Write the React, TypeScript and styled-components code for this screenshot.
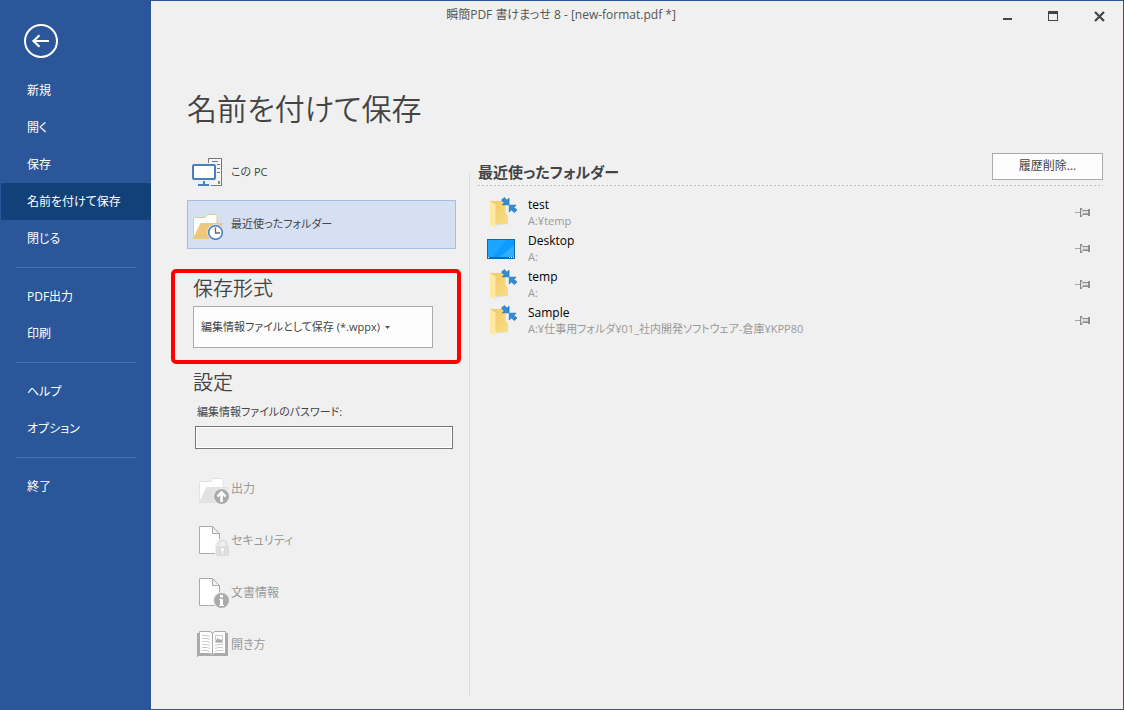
import React from "react";
import styled, { createGlobalStyle } from "styled-components";

const GlobalStyle = createGlobalStyle`
  *, *::before, *::after { box-sizing: border-box; }
  body {
    margin: 0;
    background: #f0f0f0;
    color: #444;
    font-family: "Open Sans", "Noto Sans CJK JP", sans-serif;
    font-size: 12px;
    line-height: 16px;
    font-feature-settings: "palt";
  }
  button, input, select { font: inherit; color: inherit; font-feature-settings: inherit; }
  h1, h2, p, ul { margin: 0; padding: 0; }
  svg { display: block; flex: none; }
`;

const Window = styled.div`
  display: flex;
  min-height: 100vh;
  border: 1px solid #2b579a;
`;

const Sidebar = styled.nav`
  flex: none;
  width: 150px;
  padding-top: 23px;
  background: #2b579a;
`;

const BackButton = styled.button`
  display: block;
  margin: 0 0 14px 23px;
  padding: 0;
  border: 0;
  background: none;
`;

const NavItem = styled.button<{ $active?: boolean }>`
  display: block;
  width: 100%;
  height: 37px;
  padding: 0 0 0 26px;
  border: 0;
  background: ${(p) => (p.$active ? "#124078" : "transparent")};
  color: #fff;
  text-align: left;
`;

const NavDivider = styled.hr`
  height: 1px;
  margin: 10px 15px;
  border: 0;
  background: #4472b9;
`;

const Main = styled.main`
  flex: 1;
  min-width: 0;
  display: flex;
  flex-direction: column;
`;

const TitleBar = styled.header`
  display: flex;
  height: 30px;
  padding-right: 1px;
`;

const WindowTitle = styled.p`
  flex: 1;
  padding: 6px 13px 0 0;
  color: #555;
  text-align: center;
`;

const CaptionButton = styled.button`
  display: flex;
  align-items: center;
  justify-content: center;
  width: 46px;
  padding: 0;
  border: 0;
  background: none;
`;

const PageTitle = styled.h1`
  margin: 54px 0 15px 36px;
  font-size: 30px;
  font-weight: 350;
  line-height: 48px;
`;

const Columns = styled.div`
  flex: 1;
  display: flex;
  gap: 8px;
  padding: 0 20px 13px;
`;

const SaveColumn = styled.div`
  flex: none;
  width: 290px;
  font-size: 11px;
`;

const Places = styled.div`
  display: flex;
  flex-direction: column;
  gap: 3px;
  padding: 0 5px 0 16px;
`;

const Place = styled.button<{ $selected?: boolean }>`
  display: flex;
  align-items: center;
  gap: 8px;
  height: 49px;
  padding: 0 3px 1px;
  border: 1px solid ${(p) => (p.$selected ? "#a3bde3" : "transparent")};
  background: ${(p) => (p.$selected ? "#d5e1f2" : "transparent")};
  line-height: 18px;
  text-align: left;

  &:disabled {
    gap: 2px;
    padding-left: 9px;
    color: #999;
    font-size: 12px;
  }
`;

const FormatSection = styled.section`
  margin-top: 20px;
  padding: 0 24px 12px 18px;
  border: 4px solid #f00;
  border-radius: 5px;
`;

const SettingsSection = styled.section`
  margin: 3px 0 16px;
  padding: 0 8px 0 22px;
`;

const SectionTitle = styled.h2`
  font-size: 20px;
  font-weight: 350;
  line-height: 32px;
`;

const SelectBox = styled.div`
  display: flex;
  align-items: center;
  gap: 4px;
  height: 42px;
  margin-top: 1px;
  padding-left: 7px;
  border: 1px solid #ababab;
  background: #fdfdfd;
`;

const FormatSelect = styled.select`
  appearance: none;
  height: 40px;
  padding: 0;
  border: 0;
  background: none;
`;

const PasswordLabel = styled.label`
  display: block;
  margin: 3px 0 4px 4px;
  line-height: 20px;
`;

const PasswordInput = styled.input`
  display: block;
  width: calc(100% - 2px);
  height: 23px;
  margin-left: 2px;
  padding: 0 4px;
  border: 1px solid #767676;
  background: #f0f0f0;
  box-shadow: inset 0 0 0 1px #fff;
`;

const ColumnDivider = styled.div`
  flex: none;
  width: 1px;
  margin-top: 26px;
  background: #dcdcdc;
`;

const RecentColumn = styled.section`
  flex: 1;
  min-width: 0;
`;

const RecentHeader = styled.div`
  display: flex;
  align-items: flex-end;
  justify-content: space-between;
  padding: 5px 0 6px;
  background: repeating-linear-gradient(90deg, #c0c0c0 0 2px, transparent 2px 4px) bottom / 100% 1px no-repeat;
`;

const RecentTitle = styled.h2`
  font-size: 15px;
  font-weight: 700;
  line-height: 16px;
`;

const ClearButton = styled.button`
  width: 111px;
  height: 27px;
  padding: 0 0 1px;
  border: 1px solid #ababab;
  background: #fdfdfd;
`;

const FolderList = styled.ul`
  margin-top: 9px;
  padding: 0 12px 0 8px;
  list-style: none;
`;

const FolderRow = styled.li`
  display: flex;
  align-items: center;
  height: 36px;
`;

const FolderLink = styled.a`
  flex: 1;
  min-width: 0;
  display: flex;
  align-items: center;
  gap: 10px;
  color: #000;
  text-decoration: none;
`;

const FolderPath = styled.span`
  display: block;
  color: #999;
  font-size: 11px;
`;

const PinButton = styled.button`
  padding: 0;
  border: 0;
  background: none;
`;

const BackIcon = () => (
  <svg width="34" height="34" viewBox="0 0 34 34" fill="none" stroke="#fff">
    <circle cx="17" cy="17" r="16" strokeWidth="2" />
    <path d="M25 17H9.5M15.5 11.2 9.5 17l6 5.8" strokeWidth="2.2" />
  </svg>
);

const ComputerIcon = () => (
  <svg width="32" height="32" viewBox="0 0 32 32" fill="none">
    <path d="M17.500 2.500h13v27h-13z" fill="#f6f6f6" stroke="#777" />
    <path d="M21 5.500h6M24 8.500h5M24 12.500h5M24 16.500h5" stroke="#777" />
    <path d="M27 25h2v3h-2z" fill="#5f9f86" />
    <rect x="0" y="7" width="26" height="18" fill="#f0f0f0" />
    <path d="M11 25h9v6H3v-3z" fill="#f0f0f0" />
    <rect x="2" y="9" width="22" height="14" rx="1" fill="#fff" stroke="#4a7fb8" strokeWidth="2" />
    <path d="M12 25h2v3h4v2H7v-2h5z" fill="#4a7fb8" />
  </svg>
);

const folderBack = "M2.5 28V8.5l1-1H14l2-3h9l1 1v8H10.5z";
const folderFront = "M2 29 9.500 13H32l-6 16z";

const RecentFolderIcon = () => (
  <svg width="32" height="32" viewBox="0 0 32 32" fill="none">
    <g transform="translate(0 2)">
      <path d={folderBack} fill="#fff" stroke="#eec67c" />
      <path d={folderFront} fill="#eec67c" />
    </g>
    <circle cx="24.500" cy="24.500" r="8.500" fill="#d5e1f2" />
    <circle cx="24.500" cy="24.500" r="6.800" fill="#fff" stroke="#4a7fb8" strokeWidth="1.500" />
    <path d="M24.500 19.500v5.500H29" stroke="#666" strokeWidth="1.300" />
  </svg>
);

const ExportIcon = () => (
  <svg width="32" height="32" viewBox="0 0 32 32" fill="none">
    <g transform="translate(0 1)">
      <path d={folderBack} fill="#fff" stroke="#e2e2e2" />
      <path d={folderFront} fill="#e2e2e2" />
    </g>
    <circle cx="24.500" cy="23.500" r="8.500" fill="#f0f0f0" />
    <circle cx="24.500" cy="23.500" r="7.500" fill="#aaa" />
    <path d="M24.500 29v-9.500M20.500 23.500l4-4.200 4 4.200" stroke="#fff" strokeWidth="2.500" />
  </svg>
);

const Sheet = () => (
  <path d="M2.500 1.500h13l7 7v20h-20zM15.500 1.500v7h7" fill="#fff" stroke="#aaa" />
);

const SecurityIcon = () => (
  <svg width="32" height="32" viewBox="0 0 32 32" fill="none">
    <Sheet />
    <path d="M18 31V19l3-5h8l3 5v12z" fill="#f0f0f0" />
    <path d="M21.500 22v-2.500a4 4 0 0 1 8 0V22" stroke="#dedede" strokeWidth="2" />
    <path d="M19 21h13v10H19z" fill="#dedede" />
    <circle cx="25.500" cy="24.500" r="1.500" fill="#fff" />
    <path d="M25 25h1v4h-1z" fill="#fff" />
  </svg>
);

const InfoIcon = () => (
  <svg width="32" height="32" viewBox="0 0 32 32" fill="none">
    <Sheet />
    <circle cx="24.500" cy="23.500" r="8.500" fill="#f0f0f0" />
    <circle cx="24.500" cy="23.500" r="7.500" fill="#aaa" />
    <path d="M23 18h3v2.500h-3zM22 22h4v6h1v1h-5v-1h1v-5h-1z" fill="#fff" />
  </svg>
);

const BookIcon = () => (
  <svg width="32" height="32" viewBox="0 0 32 32" fill="none">
    <path d="M0 4h31v23H1v1H0z" fill="#aaa" />
    <path d="M2.500 2.500H13l2.500 1.500L18 2.500h10.500v22H18l-2.500 1-2.500-1H2.500z" fill="#fff" stroke="#aaa" />
    <path d="M15.500 4v21" stroke="#aaa" />
    <path d="M5 6.500h5l3 1M5 9.500h5l3 1M5 12.500h5l3 1M5 15.500h5l3 1M5 18.500h5l3 1M5 21.500h5l3 1M26 15.500h-5l-3 1M26 18.500h-5l-3 1M26 21.500h-5l-3 1" stroke="#ccc" />
    <path d="M18.500 6.500h7v7h-7z" stroke="#ccc" />
    <path d="M19 13v-2l2-2 2 2 1-1 1 1v2z" fill="#aaa" />
  </svg>
);

const FolderIcon = () => (
  <svg width="32" height="32" viewBox="0 0 32 32">
    <defs>
      <linearGradient id="folder-body" x1="0" x2="1" y1="0" y2="1">
        <stop offset="0" stopColor="#f2cc65" />
        <stop offset="1" stopColor="#f8dc86" />
      </linearGradient>
    </defs>
    <path d="M4 4h14.500l1 1v11l2.500 3v8H9z" fill="url(#folder-body)" />
    <path d="m4 4 5.500 3.500V31L4 27.500z" fill="#ffe8a2" />
    <path d="M22 27h1.500L10 28.500V27z" fill="#e4e0d2" />
    <g fill="#2b8fde" stroke="#1b6cae" strokeWidth="0.700">
      <path d="M23 7.800h-6.500l2-2-3-2.600L18.200.5l2.800 2.800 2-2z" />
      <path d="M23.300 8.200H30l-2.200 2.200 3.200 2.500-2.800 2.700-2.800-2.800-2.100 2.200z" />
    </g>
  </svg>
);

const DesktopIcon = () => (
  <svg width="32" height="32" viewBox="0 0 32 32">
    <path d="M1 6h28v20H1z" fill="#0c68b0" />
    <path d="M2 7h26v17H2z" fill="#0c9bff" />
    <path d="M2 7h18L7 24H2z" fill="#1ca5ff" />
    <path d="M28 12v12H14z" fill="#35adff" />
    <path d="M2 24h1v1H2zM23 24h1v1h-1zM25 24h1v1h-1zM27 24h1v1h-1z" fill="#fff" />
  </svg>
);

const PinIcon = () => (
  <svg width="16" height="16" viewBox="0 1 16 16">
    <path d="M0 8h5v1H0z" fill="#a5a5a5" />
    <path d="M5 4h2v1l1 1h5V5h2v7h-2v-1H8l-1 1v1H5z" fill="#8b8b8f" />
    <path d="M6 5v7l2-2h5V7H8z" fill="#dcdde0" />
    <path d="M8 9h5v1H8z" fill="#b0b2b8" />
  </svg>
);

const MinimizeIcon = () => (
  <svg width="11" height="11" viewBox="0 0 11 11">
    <path d="M1 7h9v2H1z" fill="#444" />
  </svg>
);

const MaximizeIcon = () => (
  <svg width="10" height="10" viewBox="0 0 10 10">
    <path d="M0 0h10v10H0zM1 3v6h8V3z" fill="#444" fillRule="evenodd" />
  </svg>
);

const CloseIcon = () => (
  <svg width="11" height="11" viewBox="0 0 11 11">
    <path d="m1 1 9 9M10 1l-9 9" stroke="#444" strokeWidth="2.200" />
  </svg>
);

const ArrowIcon = () => (
  <svg width="5" height="3" viewBox="0 0 5 3">
    <path d="M0 0h5L2.500 3z" fill="#555" />
  </svg>
);

const navGroups = [
  ["新規", "開く", "保存", "名前を付けて保存", "閉じる"],
  ["PDF出力", "印刷"],
  ["ヘルプ", "オプション"],
  ["終了"],
];

const disabledPlaces = [
  { label: "出力", Icon: ExportIcon },
  { label: "セキュリティ", Icon: SecurityIcon },
  { label: "文書情報", Icon: InfoIcon },
  { label: "開き方", Icon: BookIcon },
];

const folders = [
  { name: "test", path: "A:¥temp", Icon: FolderIcon },
  { name: "Desktop", path: "A:", Icon: DesktopIcon },
  { name: "temp", path: "A:", Icon: FolderIcon },
  { name: "Sample", path: "A:¥仕事用フォルダ¥01_社内開発ソフトウェア-倉庫¥KPP80", Icon: FolderIcon },
];

export default function App() {
  return (
    <>
      <GlobalStyle />
      <Window>
        <Sidebar>
          <BackButton aria-label="戻る">
            <BackIcon />
          </BackButton>
          {navGroups.map((group, index) => (
            <React.Fragment key={group[0]}>
              {index > 0 && <NavDivider />}
              {group.map((label) => (
                <NavItem key={label} $active={label === "名前を付けて保存"}>
                  {label}
                </NavItem>
              ))}
            </React.Fragment>
          ))}
        </Sidebar>
        <Main>
          <TitleBar>
            <WindowTitle>瞬簡PDF 書けまっせ 8 - [new-format.pdf *]</WindowTitle>
            <CaptionButton aria-label="最小化"><MinimizeIcon /></CaptionButton>
            <CaptionButton aria-label="最大化"><MaximizeIcon /></CaptionButton>
            <CaptionButton aria-label="閉じる"><CloseIcon /></CaptionButton>
          </TitleBar>
          <PageTitle>名前を付けて保存</PageTitle>
          <Columns>
            <SaveColumn>
              <Places>
                <Place><ComputerIcon />この PC</Place>
                <Place $selected><RecentFolderIcon />最近使ったフォルダー</Place>
              </Places>
              <FormatSection>
                <SectionTitle id="format-title">保存形式</SectionTitle>
                <SelectBox>
                  <FormatSelect aria-labelledby="format-title">
                    <option>編集情報ファイルとして保存 (*.wppx)</option>
                  </FormatSelect>
                  <ArrowIcon />
                </SelectBox>
              </FormatSection>
              <SettingsSection>
                <SectionTitle>設定</SectionTitle>
                <PasswordLabel htmlFor="password">編集情報ファイルのパスワード:</PasswordLabel>
                <PasswordInput id="password" type="password" />
              </SettingsSection>
              <Places>
                {disabledPlaces.map(({ label, Icon }) => (
                  <Place key={label} disabled><Icon />{label}</Place>
                ))}
              </Places>
            </SaveColumn>
            <ColumnDivider />
            <RecentColumn>
              <RecentHeader>
                <RecentTitle>最近使ったフォルダー</RecentTitle>
                <ClearButton>履歴削除...</ClearButton>
              </RecentHeader>
              <FolderList>
                {folders.map(({ name, path, Icon }) => (
                  <FolderRow key={name}>
                    <FolderLink href="#">
                      <Icon />
                      <span>
                        {name}
                        <FolderPath>{path}</FolderPath>
                      </span>
                    </FolderLink>
                    <PinButton aria-label="ピン留め"><PinIcon /></PinButton>
                  </FolderRow>
                ))}
              </FolderList>
            </RecentColumn>
          </Columns>
        </Main>
      </Window>
    </>
  );
}
